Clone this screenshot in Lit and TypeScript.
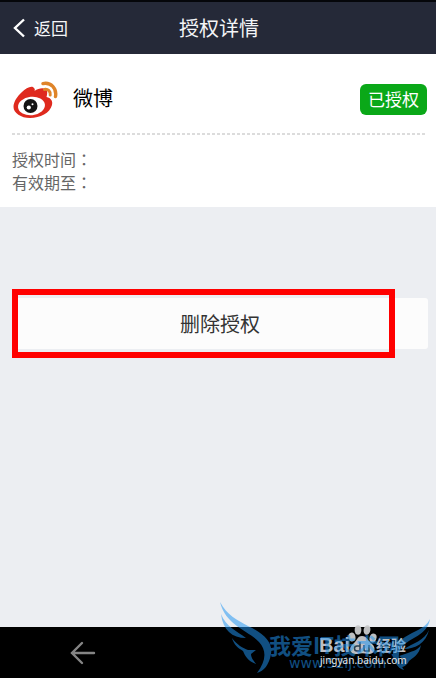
import { LitElement, html, css, svg } from "lit";
import { customElement } from "lit/decorators.js";

const fontStack = css`"Noto Sans CJK SC", "Noto Sans", sans-serif`;

@customElement("weibo-logo")
class WeiboLogo extends LitElement {
  static styles = css`
    :host { display: block; }
    svg { display: block; }
  `;
  render() {
    return html`<svg width="46" height="38" viewBox="0 0 46 38" aria-hidden="true">
      <path fill="#df2a1e" d="M10 11C14 7 20 4 22 7C23 8 23 9 22.500 10C27 6.500 34 6 35 10C35.500 12 35 14 34.500 16C39 17 41 20 40 24C38 32 28 37 18 37C9 37 1.500 32 1.500 26C1.500 21 5 15.500 10 11Z"/>
      <ellipse cx="19.500" cy="25" rx="13.500" ry="9.200" fill="#fff" transform="rotate(-6 19.500 25)"/>
      <circle cx="18.500" cy="25" r="7" fill="#141414"/>
      <circle cx="16.800" cy="26.500" r="2.100" fill="#fff"/>
      <circle cx="20.500" cy="23.300" r="1" fill="#fff"/>
      <path fill="none" stroke="#df8429" stroke-width="3.400" stroke-linecap="round" d="M31 2.600C39 1 45 7.500 43.500 15.500"/>
      <path fill="none" stroke="#df8429" stroke-width="3" stroke-linecap="round" d="M32.500 8.400C36 7.800 38.800 10.500 38.200 14"/>
    </svg>`;
  }
}

@customElement("site-watermark")
class SiteWatermark extends LitElement {
  static styles = css`
    :host { display: block; pointer-events: none; }
    svg { display: block; }
    .blue { fill: #2196f3; }
    .site { font: 700 22px "Noto Sans CJK SC", sans-serif; }
    .url { font: 14px "DejaVu Sans", sans-serif; }
    .grey { fill: #c9cacc; }
    .brand { font: 700 20px "Liberation Sans", sans-serif; }
    .cn { font: 700 15px ${fontStack}; }
    .host { font: 10px "Noto Sans", sans-serif; }
  `;
  render() {
    return html`<svg width="220" height="80" viewBox="216 598 220 80">
      <g class="grey" opacity="0.95">
        <text class="brand" x="319" y="652">Bai</text>
        <ellipse cx="352" cy="637" rx="3.400" ry="4.500" transform="rotate(-15 352 637)"/>
        <ellipse cx="358" cy="630" rx="3.400" ry="4.800"/>
        <ellipse cx="367" cy="630" rx="3.400" ry="4.800" transform="rotate(10 367 630)"/>
        <ellipse cx="373" cy="638" rx="3.400" ry="4.500" transform="rotate(20 373 638)"/>
        <path d="M362 636C367 636 368 641 372 644C377 648 374 655 368 654C364 653 361 653 357 654C350 655 348 648 353 644C357 641 357 636 362 636Z"/>
        <text class="cn" x="376" y="651">经验</text>
      </g>
      <path fill="none" stroke="#2a4052" stroke-width="1.500" d="M360 642v9h-3a2 2 0 0 1 0-5h3M364 645v5q0 1 1 1h4v-6"/>
      <g class="blue" opacity="0.53">
        <text class="site" x="269" y="654">我爱IT技术网</text>
        <text class="url" x="289" y="668">www.52ij.com</text>
        ${svg`
          <path d="M220 602C227 615 237 620 248 626C265 634 273 643 271 654C269 665 264 671 257 673C266 661 267 651 259 642C248 630 226 626 220 602Z"/>
          <path d="M221 614C226 627 237 631 246 638C232 638 223 630 221 614Z"/>
          <path d="M232 638C237 645 243 648 248 650L256 650L251 654C251 658 254 661 256 664C248 661 245 656 243 651C238 648 234 645 232 638Z"/>
          <path d="M430 619C425 629 414 631 405 637C394 644 390 654 395 662C397 666 400 669 404 670C398 661 397 654 402 647C410 637 427 636 430 619Z"/>
          <path d="M429 630C426 643 415 649 404 649C413 643 424 641 429 630Z"/>
          <path d="M421 645C419 656 412 658 409 661C407 665 404 667 399 668L403 659L399 656L408 653C413 651 418 650 421 645Z"/>
        `}
      </g>
      <g fill="#e8e8e8"><text class="host" x="320" y="664">jingyan.baidu.com</text></g>
    </svg>`;
  }
}

@customElement("app-root")
class AppRoot extends LitElement {
  static styles = css`
    :host {
      display: flex;
      flex-direction: column;
      position: relative;
      min-height: 100vh;
      background: #eceef2;
      color: #000;
      font-family: ${fontStack};
    }
    * { box-sizing: border-box; }
    button { font-family: inherit; border: 0; padding: 0; cursor: pointer; }
    header {
      display: grid;
      grid-template-columns: 1fr auto 1fr;
      align-items: center;
      height: 54px;
      padding: 0 10px 0 12px;
      border-top: 2px solid #05060a;
      background: #252938;
      color: #f4f5f7;
    }
    h1, h2, dl, dd { margin: 0; font-weight: 400; }
    h1 { font-size: 20px; line-height: 28px; }
    .back {
      display: flex;
      align-items: center;
      gap: 8px;
      background: none;
      color: inherit;
      font-size: 17px;
      line-height: 24px;
    }
    .card { padding: 24px 9px 13px 12px; background: #fff; }
    .app {
      display: flex;
      align-items: center;
      gap: 15px;
      height: 55px;
      padding-bottom: 12px;
    }
    .rule {
      height: 2px;
      background: repeating-linear-gradient(90deg, #dcdcdc 0 3px, #fff 3px 5px);
    }
    h2 { flex: 1; padding-bottom: 4px; font-size: 20px; line-height: 28px; }
    .badge {
      padding: 3px 8px 4px;
      border-radius: 6px;
      background: #0aa818;
      color: #fff;
      font-size: 17px;
      line-height: 24px;
    }
    dl { padding-top: 13px; color: #666; font-size: 16px; line-height: 23px; }
    .colon { font-family: "Noto Sans CJK TC", sans-serif; }
    .row { display: flex; }
    .action { position: relative; margin: 91px 8px 0 12px; }
    .remove {
      display: block;
      width: 100%;
      height: 51px;
      border-radius: 3px;
      background: #fcfcfc;
      color: #333;
      font-size: 20px;
      line-height: 28px;
    }
    .mark {
      position: absolute;
      inset: -9px 33px -9px 0;
      border: 6px solid #f00;
      pointer-events: none;
    }
    nav {
      display: flex;
      align-items: center;
      height: 51px;
      margin-top: auto;
      padding-left: 16%;
      background: #000;
    }
    .nav-back { background: none; }
    svg { display: block; }
    site-watermark { position: absolute; right: 0; bottom: 0; }
  `;

  row(label: string) {
    return html`<div class="row"><dt>${label}<span class="colon" lang="zh-TW">：</span></dt><dd></dd></div>`;
  }

  render() {
    return html`
      <header>
        <button class="back">
          <svg width="14" height="20" viewBox="0 0 14 20" fill="none" stroke="#fff" stroke-width="2.400" aria-hidden="true">
            <path d="M12 1.500L3 10L12 18.500"/>
          </svg>返回
        </button>
        <h1>授权详情</h1>
      </header>
      <section class="card">
        <div class="app">
          <weibo-logo></weibo-logo>
          <h2>微博</h2>
          <span class="badge">已授权</span>
        </div>
        <div class="rule"></div>
        <dl>${this.row("授权时间")}${this.row("有效期至")}</dl>
      </section>
      <div class="action">
        <button class="remove">删除授权</button>
        <div class="mark"></div>
      </div>
      <nav>
        <button class="nav-back" aria-label="返回">
          <svg width="26" height="26" viewBox="0 0 26 26" fill="none" stroke="#858585" stroke-width="2.400" stroke-linecap="round" aria-hidden="true">
            <path d="M12 3L2 13L12 23M2 13H24"/>
          </svg>
        </button>
      </nav>
      <site-watermark></site-watermark>
    `;
  }
}
